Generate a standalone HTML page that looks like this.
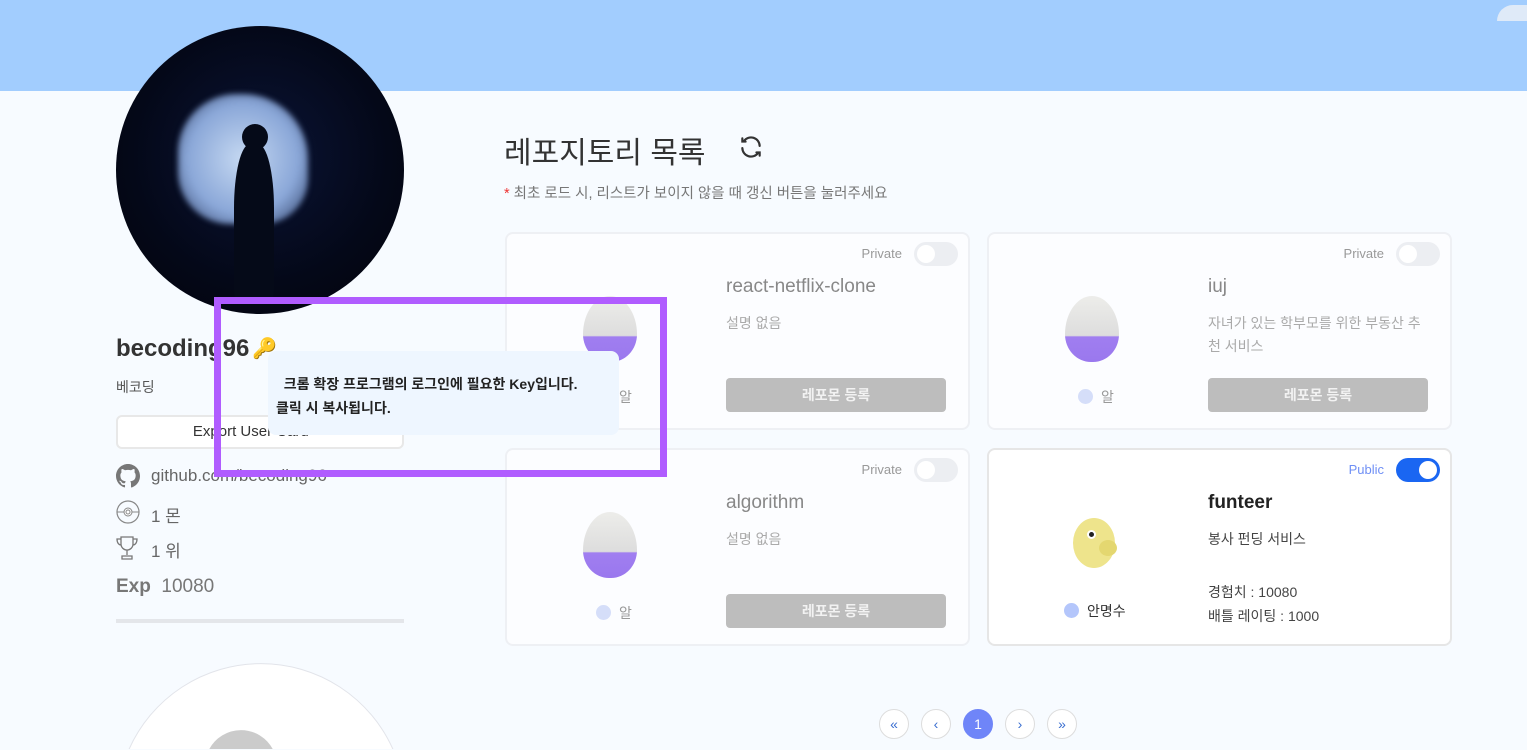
<!DOCTYPE html>
<html style="width:1527px;height:750px;overflow:hidden"><head><meta charset="utf-8"><style>
*{margin:0;padding:0;box-sizing:border-box}
body{width:1527px;height:750px;overflow:hidden;background:#f7fbff;font-family:"Liberation Sans","Noto Sans CJK KR",sans-serif;position:relative;color:#333}
.abs{position:absolute}
.top{left:0;top:0;width:1527px;height:91px;background:#a2cdfe}
.card{position:absolute;width:465px;height:198px;background:#fcfdff;border:2px solid #eef0f4;border-radius:8px}
.card .priv{position:absolute;right:66px;top:12px;font-size:13px;color:#999}
.tog{position:absolute;right:10px;top:8px;width:44px;height:24px;border-radius:12px;background:#eceef2}
.tog::after{content:"";position:absolute;left:3px;top:3px;width:18px;height:18px;border-radius:50%;background:#fff}
.tog.on{background:#1a66f2}.tog.on::after{left:23px}
.name{position:absolute;left:219px;top:42px;font-size:19px;color:#888}
.desc{position:absolute;left:219px;top:78px;font-size:14px;color:#aaa;line-height:23px;width:220px}
.btn{position:absolute;left:219px;top:144px;width:220px;height:34px;background:#bdbdbd;border-radius:4px;color:#f2f2f2;font-size:14px;text-align:center;line-height:34px;font-weight:bold}
.egg{position:absolute;left:76px;top:62px;width:54px;height:66px;border-radius:50% 50% 48% 48%/58% 58% 42% 42%;background:linear-gradient(#ededea 0,#ddd 60%,#a07ef0 62%,#9a78ee);}
.dot{position:absolute;width:15px;height:15px;border-radius:50%;background:#d5def9}
.lbl{position:absolute;font-size:14px;color:#999}
.pg{position:absolute;top:709px;width:30px;height:30px;border-radius:50%;border:1px solid #ddd;background:#fff;text-align:center;line-height:28px;font-size:14px;color:#3a6ed0}
.side{font-size:17px;color:#666}
</style></head><body>
<div class="abs top"></div>
<div class="abs" style="right:0;top:5px;width:30px;height:16px;background:#dfeaf8;border-radius:16px 0 0 0"></div>

<div class="abs" style="left:116px;top:26px;width:288px;height:288px;border-radius:50%;background:radial-gradient(circle at 50% 45%,#0a1436 0,#040818 60%,#02030a 100%);overflow:hidden">
 <div class="abs" style="left:62px;top:68px;width:130px;height:130px;background:radial-gradient(ellipse at 50% 50%,#c6d9f2,#8aa7d8 60%,#2a3a60);border-radius:45% 50% 35% 40%;filter:blur(3px)"></div>
 <div class="abs" style="left:126px;top:98px;width:26px;height:26px;border-radius:50%;background:#050a18"></div>
 <div class="abs" style="left:118px;top:118px;width:40px;height:160px;background:#050a18;border-radius:40% 40% 10% 10%"></div>
</div>

<div class="abs" style="left:116px;top:335px;font-size:24px;font-weight:bold;color:#333">becoding96</div>
<div class="abs" style="left:252px;top:336px;font-size:20px;color:#c8c050">&#128273;</div>
<div class="abs" style="left:116px;top:377px;font-size:14px;color:#555">베코딩</div>
<div class="abs" style="left:116px;top:415px;width:288px;height:34px;border:2px solid #e8e8e8;border-radius:6px;background:#fff;text-align:center;line-height:30px;font-size:15px;color:#333">Export User Card ▭</div>
<svg class="abs" style="left:116px;top:464px" width="24" height="24" viewBox="0 0 16 16"><path fill="#777" d="M8 0C3.58 0 0 3.58 0 8c0 3.54 2.29 6.53 5.47 7.59.4.07.55-.17.55-.38v-1.33c-2.23.48-2.7-1.07-2.7-1.07-.36-.92-.89-1.17-.89-1.17-.73-.5.06-.49.06-.49.8.06 1.23.83 1.23.83.71 1.22 1.87.87 2.33.66.07-.52.28-.87.5-1.07-1.78-.2-3.64-.89-3.64-3.95 0-.87.31-1.59.82-2.15-.08-.2-.36-1.02.08-2.12 0 0 .67-.21 2.2.82a7.6 7.6 0 0 1 4 0c1.53-1.04 2.2-.82 2.2-.82.44 1.1.16 1.92.08 2.12.51.56.82 1.27.82 2.15 0 3.07-1.87 3.75-3.65 3.95.29.25.54.73.54 1.48v2.2c0 .21.15.46.55.38A8 8 0 0 0 16 8c0-4.42-3.58-8-8-8z"/></svg>
<div class="abs side" style="left:151px;top:466px">github.com/becoding96</div>
<svg class="abs" style="left:116px;top:500px" width="24" height="24" viewBox="0 0 24 24"><circle cx="12" cy="12" r="11" fill="none" stroke="#888" stroke-width="1.2"/><line x1="1" y1="12" x2="23" y2="12" stroke="#888"/><circle cx="12" cy="12" r="4" fill="#fff" stroke="#888"/><circle cx="12" cy="12" r="2" fill="none" stroke="#888"/></svg>
<div class="abs side" style="left:151px;top:502px">1 몬</div>
<svg class="abs" style="left:116px;top:535px" width="22" height="26" viewBox="0 0 22 26"><path d="M5 2h12v7a6 6 0 0 1-12 0z M5 4H1c0 4 2 6 4 6 M17 4h4c0 4-2 6-4 6 M11 15v5 M6 24h10v-3H6z" fill="none" stroke="#777" stroke-width="1.3"/></svg>
<div class="abs side" style="left:151px;top:537px">1 위</div>
<div class="abs" style="left:116px;top:576px;font-size:19px;color:#777"><b>Exp</b>&nbsp; 10080</div>
<div class="abs" style="left:116px;top:619px;width:288px;height:4px;background:#e4e6ea"></div>

<svg class="abs" style="left:100px;top:663px" width="330" height="86" viewBox="0 0 330 86">
 <path d="M28.7 87 A144.5 144.5 0 0 1 293.3 87" fill="#fff" stroke="#e2e4ea"/>
 <path d="M108.8 87 A36 36 0 0 1 173.2 87 Z" fill="#cbcbcb"/>
</svg>

<div class="abs" style="left:504px;top:128px;font-size:30px;color:#333">레포지토리 목록</div>
<svg class="abs" style="left:738px;top:134px" width="26" height="26" viewBox="0 0 24 24" fill="none" stroke="#333" stroke-width="2" stroke-linecap="round"><path d="M20 11a8 8 0 0 0-14.5-4.5M4 4v3h3M4 13a8 8 0 0 0 14.5 4.5M20 20v-3h-3"/></svg>
<div class="abs" style="left:504px;top:182px;font-size:14.5px;color:#777"><span style="color:#e33">*</span> 최초 로드 시, 리스트가 보이지 않을 때 갱신 버튼을 눌러주세요</div>

<div class="card" style="left:505px;top:232px"><div class="priv">Private</div><div class="tog"></div><div class="name">react-netflix-clone</div><div class="desc">설명 없음</div><div class="btn">레포몬 등록</div><div class="egg"></div><div class="dot" style="left:89px;top:155px"></div><div class="lbl" style="left:112px;top:153px">알</div></div>
<div class="card" style="left:987px;top:232px"><div class="priv">Private</div><div class="tog"></div><div class="name">iuj</div><div class="desc">자녀가 있는 학부모를 위한 부동산 추천 서비스</div><div class="btn">레포몬 등록</div><div class="egg"></div><div class="dot" style="left:89px;top:155px"></div><div class="lbl" style="left:112px;top:153px">알</div></div>
<div class="card" style="left:505px;top:448px"><div class="priv">Private</div><div class="tog"></div><div class="name">algorithm</div><div class="desc">설명 없음</div><div class="btn">레포몬 등록</div><div class="egg"></div><div class="dot" style="left:89px;top:155px"></div><div class="lbl" style="left:112px;top:153px">알</div></div>
<div class="card" style="left:987px;top:448px;border-color:#e6e6e6;background:#fff"><div class="priv" style="color:#6f8ff5">Public</div><div class="tog on"></div>
 <div class="name" style="color:#222;font-weight:bold">funteer</div><div class="desc" style="color:#444">봉사 펀딩 서비스</div>
 <div class="abs" style="left:219px;top:130px;font-size:14px;color:#444;line-height:24px">경험치 : 10080<br>배틀 레이팅 : 1000</div>
 <div class="abs" style="left:84px;top:68px;width:42px;height:50px;border-radius:50%;background:#eee48c"></div>
 <div class="abs" style="left:110px;top:90px;width:18px;height:16px;border-radius:50%;background:#e4d770"></div>
 <div class="abs" style="left:98px;top:80px;width:9px;height:9px;border-radius:50%;background:#222;border:2px solid #fff"></div>
 <div class="dot" style="left:75px;top:153px;background:#b4c6fb"></div><div class="lbl" style="left:98px;top:151px;color:#333">안명수</div></div>

<div class="abs" style="left:268px;top:351px;width:351px;height:84px;background:#eef6ff;border-radius:8px"></div>
<div class="abs" style="left:276px;top:372px;font-size:14px;color:#222;line-height:24px;font-weight:bold">&nbsp;&nbsp;크롬 확장 프로그램의 로그인에 필요한 Key입니다.<br>클릭 시 복사됩니다.</div>
<div class="abs" style="left:214px;top:297px;width:453px;height:180px;border:7px solid #b05cff"></div>

<div class="pg" style="left:879px">«</div><div class="pg" style="left:921px">‹</div>
<div class="pg" style="left:963px;background:#6f85f8;border-color:#6f85f8;color:#fff">1</div>
<div class="pg" style="left:1005px">›</div><div class="pg" style="left:1047px">»</div>
</body></html>
